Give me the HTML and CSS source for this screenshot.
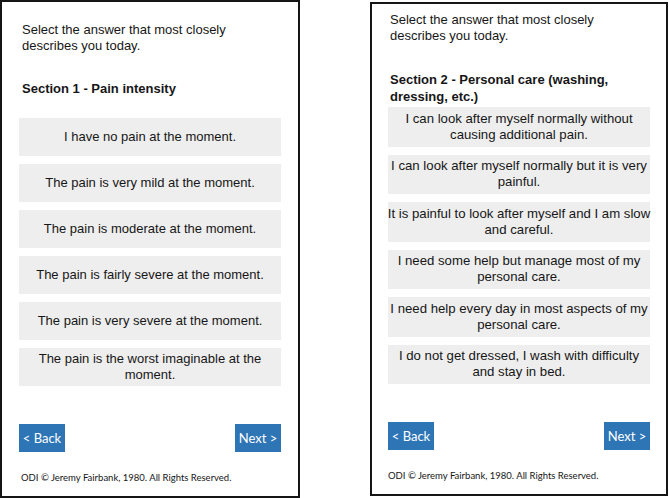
FILE: index.html
```html
<!DOCTYPE html>
<html>
<head>
    <meta charset="utf-8">
    <title>Oswestry Disability Index</title>
    <link rel="stylesheet" href="styles.css">
</head>
<body>
    <div class="screens">
        <!-- Section 1 -->
        <section class="phone phone-first">
            <p class="prompt">Select the answer that most closely<br>describes you today.</p>
            <h2 class="section-title">Section 1 - Pain intensity</h2>
            <div class="options">
                <button class="option"><span>I have no pain at the moment.</span></button>
                <button class="option"><span>The pain is very mild at the moment.</span></button>
                <button class="option"><span>The pain is moderate at the moment.</span></button>
                <button class="option"><span>The pain is fairly severe at the moment.</span></button>
                <button class="option"><span>The pain is very severe at the moment.</span></button>
                <button class="option"><span>The pain is the worst imaginable at the<br>moment.</span></button>
            </div>
            <div class="nav">
                <button class="nav-btn">&lt; Back</button>
                <button class="nav-btn">Next &gt;</button>
            </div>
            <p class="copyright">ODI © Jeremy Fairbank, 1980. All Rights Reserved.</p>
        </section>

        <!-- Section 2 -->
        <section class="phone phone-second">
            <p class="prompt">Select the answer that most closely<br>describes you today.</p>
            <h2 class="section-title">Section 2 - Personal care (washing,<br>dressing, etc.)</h2>
            <div class="options">
                <button class="option"><span>I can look after myself normally without<br>causing additional pain.</span></button>
                <button class="option"><span>I can look after myself normally but it is very<br>painful.</span></button>
                <button class="option"><span>It is painful to look after myself and I am slow<br>and careful.</span></button>
                <button class="option"><span>I need some help but manage most of my<br>personal care.</span></button>
                <button class="option"><span>I need help every day in most aspects of my<br>personal care.</span></button>
                <button class="option"><span>I do not get dressed, I wash with difficulty<br>and stay in bed.</span></button>
            </div>
            <div class="nav">
                <button class="nav-btn">&lt; Back</button>
                <button class="nav-btn">Next &gt;</button>
            </div>
            <p class="copyright">ODI © Jeremy Fairbank, 1980. All Rights Reserved.</p>
        </section>
    </div>
</body>
</html>
```

FILE: styles.css
```css
body {
    margin: 0;
    background: white;
    font-family: "Liberation Sans", Arial, sans-serif;
    color: #161616;
}
.screens {
    display: flex;
    gap: 70px;
}
.phone {
    box-sizing: border-box;
    display: flex;
    flex-direction: column;
    border: 2px solid #151515;
    padding: 0 17px;
}
.phone-first {
    width: 300px;
    height: 498px;
    padding-top: 20px;
}
.phone-second {
    width: 298px;
    height: 494px;
    margin-top: 2px;
    padding: 8px 16px 0;
}
.prompt {
    margin: 0 0 0 3px;
    font-size: 13px;
    line-height: 16px;
}
.section-title {
    margin: 26px 0 0 3px;
    font-size: 13px;
    line-height: 17px;
    font-weight: bold;
}
.phone-second .prompt,
.phone-second .section-title {
    margin-left: 2px;
}
.phone-second .section-title {
    margin-top: 27px;
}
.options {
    display: flex;
    flex-direction: column;
    gap: 8px;
    margin-top: 21px;
}
.phone-second .options {
    margin-top: 2px;
}
.option {
    display: flex;
    align-items: center;
    justify-content: center;
    min-height: 38px;
    padding: 3px 0;
    border: none;
    background: #eeeeee;
    font-family: inherit;
    font-size: 13px;
    line-height: 16px;
    color: #161616;
    cursor: pointer;
}
.option span {
    white-space: nowrap;
}
.phone-second .option {
    min-height: 39.5px;
    font-size: 13.2px;
}
.nav {
    display: flex;
    justify-content: space-between;
    margin-top: 38px;
}
.nav-btn {
    height: 28px;
    width: 46px;
    padding: 0;
    border: none;
    background: #2e75b6;
    color: white;
    font-family: Lato, "Open Sans", sans-serif;
    font-size: 13px;
    cursor: pointer;
}
.copyright {
    margin: 20px 0 0 2px;
    font-family: Lato, "Open Sans", sans-serif;
    font-size: 9.5px;
    line-height: 12px;
    color: #161616;
}
.phone-second .copyright {
    margin-left: 0;
}
```
